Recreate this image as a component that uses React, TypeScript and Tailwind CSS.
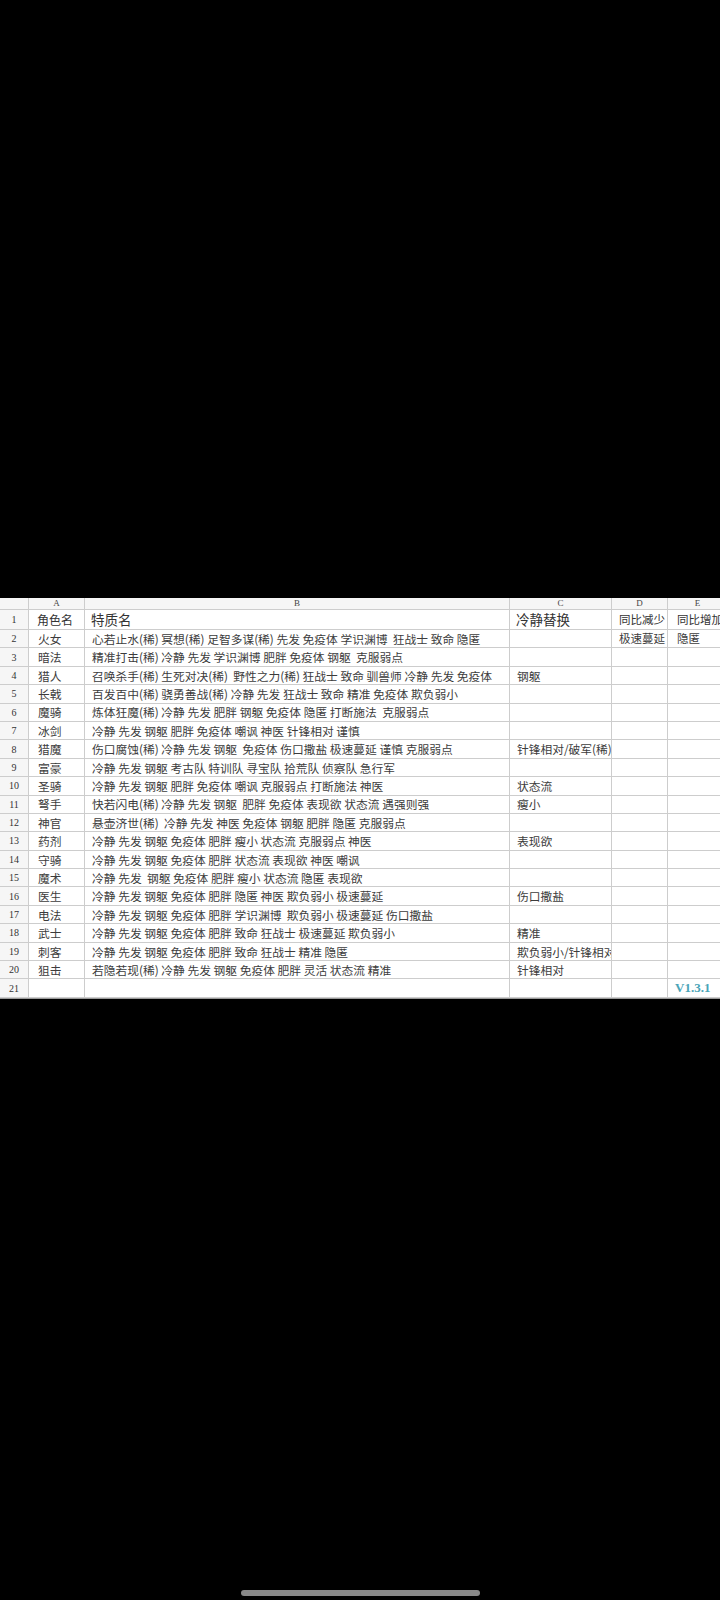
const cjk = { fontFamily: '"Noto Sans CJK SC", "Noto Sans", sans-serif' };
const serif = { fontFamily: '"Liberation Serif", "DejaVu Serif", serif' };

type Row = [string, string, string?, string?, string?];

const rows: Row[] = [
  ["火女", "心若止水(稀) 冥想(稀) 足智多谋(稀) 先发 免疫体 学识渊博  狂战士 致命 隐匿", "", "极速蔓延", "隐匿"],
  ["暗法", "精准打击(稀) 冷静 先发 学识渊博 肥胖 免疫体 钢躯  克服弱点"],
  ["猎人", "召唤杀手(稀) 生死对决(稀)  野性之力(稀) 狂战士 致命 驯兽师 冷静 先发 免疫体", "钢躯"],
  ["长戟", "百发百中(稀) 骁勇善战(稀) 冷静 先发 狂战士 致命 精准 免疫体 欺负弱小"],
  ["魔骑", "炼体狂魔(稀) 冷静 先发 肥胖 钢躯 免疫体 隐匿 打断施法  克服弱点"],
  ["冰剑", "冷静 先发 钢躯 肥胖 免疫体 嘲讽 神医 针锋相对 谨慎"],
  ["猎魔", "伤口腐蚀(稀) 冷静 先发 钢躯  免疫体 伤口撒盐 极速蔓延 谨慎 克服弱点", "针锋相对/破军(稀)"],
  ["富豪", "冷静 先发 钢躯 考古队 特训队 寻宝队 拾荒队 侦察队 急行军"],
  ["圣骑", "冷静 先发 钢躯 肥胖 免疫体 嘲讽 克服弱点 打断施法 神医", "状态流"],
  ["弩手", "快若闪电(稀) 冷静 先发 钢躯  肥胖 免疫体 表现欲 状态流 遇强则强", "瘦小"],
  ["神官", "悬壶济世(稀)  冷静 先发 神医 免疫体 钢躯 肥胖 隐匿 克服弱点"],
  ["药剂", "冷静 先发 钢躯 免疫体 肥胖 瘦小 状态流 克服弱点 神医", "表现欲"],
  ["守骑", "冷静 先发 钢躯 免疫体 肥胖 状态流 表现欲 神医 嘲讽"],
  ["魔术", "冷静 先发  钢躯 免疫体 肥胖 瘦小 状态流 隐匿 表现欲"],
  ["医生", "冷静 先发 钢躯 免疫体 肥胖 隐匿 神医 欺负弱小 极速蔓延", "伤口撒盐"],
  ["电法", "冷静 先发 钢躯 免疫体 肥胖 学识渊博  欺负弱小 极速蔓延 伤口撒盐"],
  ["武士", "冷静 先发 钢躯 免疫体 肥胖 致命 狂战士 极速蔓延 欺负弱小", "精准"],
  ["刺客", "冷静 先发 钢躯 免疫体 肥胖 致命 狂战士 精准 隐匿", "欺负弱小/针锋相对"],
  ["狙击", "若隐若现(稀) 冷静 先发 钢躯 免疫体 肥胖 灵活 状态流 精准", "针锋相对"],
];

const cols = "grid grid-cols-[29px_56px_425px_102px_56px_60px]";
const cell = "border-r border-b border-[#cdcdcd] overflow-hidden whitespace-pre flex items-center";

function NumCell({ n }: { n: string }) {
  return (
    <div className={`${cell} justify-center bg-[#f6f6f6] text-[10px] text-[#333]`} style={serif}>
      {n}
    </div>
  );
}

export default function App() {
  return (
    <div className="h-[1600px] bg-black flex flex-col overflow-hidden">
      <div className="mt-[598px] w-[720px] overflow-hidden bg-white border-b border-[#9a9a9a]">
        <div className="w-[728px]">
          {/* column letters */}
          <div className={`${cols} h-[12px] bg-[#f6f6f6] text-[9px] text-[#444]`} style={serif}>
            {["", "A", "B", "C", "D", "E"].map((c, i) => (
              <div key={i} className={`${cell} justify-center`}>{c}</div>
            ))}
          </div>

          {/* title row */}
          <div className={`${cols} h-[20px] text-[#333]`} style={cjk}>
            <NumCell n="1" />
            <div className={`${cell} pl-[8px] text-[12px]`}>角色名</div>
            <div className={`${cell} pl-[6px] text-[13.5px]`}>特质名</div>
            <div className={`${cell} pl-[6px] text-[13.5px]`}>冷静替换</div>
            <div className={`${cell} pl-[7px] text-[11.5px]`}>同比减少</div>
            <div className={`${cell} pl-[9px] text-[11.5px]`}>同比增加</div>
          </div>

          {rows.map((r, i) => (
            <div key={i} className={`${cols} h-[18.4px] text-[11.75px] text-[#3c3c3c]`} style={cjk}>
              <NumCell n={String(i + 2)} />
              <div className={`${cell} pl-[9px]`}>{r[0]}</div>
              <div className={`${cell} pl-[7px]`}>{r[1]}</div>
              <div className={`${cell} pl-[7px]`}>{r[2] || ""}</div>
              <div className={`${cell} pl-[7px] text-[11.5px]`}>{r[3] || ""}</div>
              <div className={`${cell} pl-[9px] text-[11.5px]`}>{r[4] || ""}</div>
            </div>
          ))}

          <div className={`${cols} h-[18.4px] text-[11px]`}>
            <NumCell n="21" />
            <div className={cell} />
            <div className={cell} />
            <div className={cell} />
            <div className={cell} />
            <div
              className={`${cell} pl-[7px] text-[13px] font-bold text-[#4aa5b8]`}
              style={serif}
            >
              V1.3.1
            </div>
          </div>
        </div>
      </div>

      <div className="mt-auto mb-[4px] flex justify-center">
        <div className="w-[239px] h-[6px] rounded-full bg-[#888]" />
      </div>
    </div>
  );
}
